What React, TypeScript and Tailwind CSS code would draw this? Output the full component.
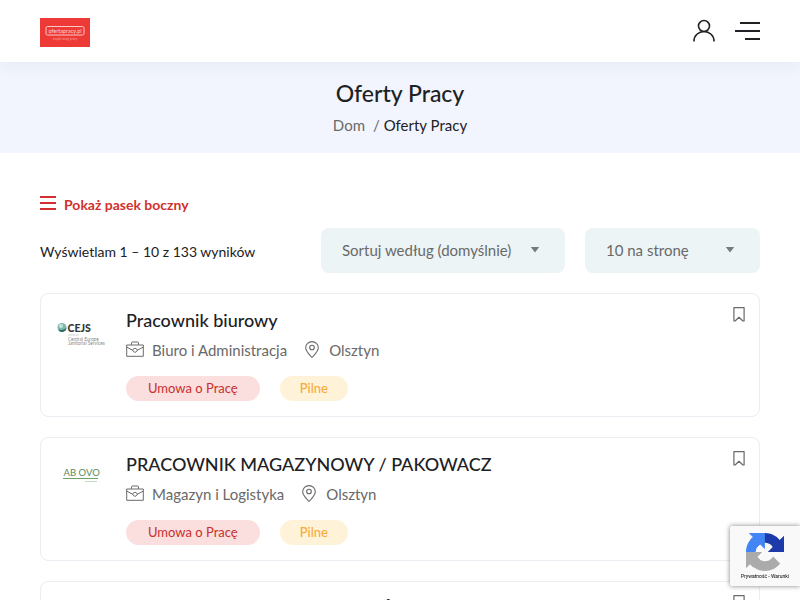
import { useState } from "react";

type Job = {
  id: number;
  title: string;
  category: string;
  city: string;
  logo: "cejs" | "abovo";
};

const jobs: Job[] = [
  { id: 1, title: "Pracownik biurowy", category: "Biuro i Administracja", city: "Olsztyn", logo: "cejs" },
  { id: 2, title: "PRACOWNIK MAGAZYNOWY / PAKOWACZ", category: "Magazyn i Logistyka", city: "Olsztyn", logo: "abovo" },
  { id: 3, title: "PRACOWNIK MAGAZYNU CZĘŚCI", category: "Magazyn i Logistyka", city: "Olsztyn", logo: "abovo" },
];

function SiteLogo() {
  return (
    <svg width="50" height="29" viewBox="0 0 50 29" aria-hidden="true">
      <rect width="50" height="29" fill="#ee3a36" />
      <rect x="6" y="8.5" width="38" height="8.5" rx="1.5" fill="none" stroke="#fbc9c4" />
      <text x="25" y="15" textAnchor="middle" fontSize="5.5" fill="#fbd5d1">
        ofertapracy.pl
      </text>
      <text x="25" y="21.5" textAnchor="middle" fontSize="3" fill="#f8a29d">
        znajdź swoją pracę
      </text>
    </svg>
  );
}

function CejsLogo() {
  return (
    <svg width="50" height="50" viewBox="0 0 50 50" aria-hidden="true">
      <circle cx="6" cy="20.5" r="4.5" fill="#7fb9ad" />
      <path d="M2 22.5a4.5 4.5 0 0 0 8.5-2c-1.5 2-4 3-8.5 2Z" fill="#2b6a66" />
      <circle cx="5" cy="19" r="2" fill="#c5e3dc" />
      <text x="11.500" y="25" fontSize="10.5" fontWeight="900" fill="#33383b">
        CEJS
      </text>
      <path d="M12 28h11" stroke="#b9bcbd" strokeWidth="0.7" />
      <text x="12" y="34" fontSize="4.7" fill="#85898b">
        Central Europe
      </text>
      <text x="12" y="38" fontSize="4.7" fill="#85898b">
        Janitorial Services
      </text>
    </svg>
  );
}

function AbovoLogo() {
  return (
    <svg width="50" height="50" viewBox="0 0 50 50" aria-hidden="true">
      <text x="7.5" y="25" fontSize="9.5" fill="#5c8a5c">
        AB OVO
      </text>
      <path d="M7 27.5h35" stroke="#6fa06e" />
      <path d="M29 30.5h12" stroke="#c3dcc2" />
    </svg>
  );
}

function UserIcon() {
  return (
    <svg width="22" height="24" viewBox="0 0 22 24" fill="none" stroke="#202124" strokeWidth="1.6" aria-hidden="true">
      <circle cx="11" cy="7" r="5.5" />
      <path d="M1 22.5V22a10 9.5 0 0 1 20 0v.5" />
    </svg>
  );
}

function BriefcaseIcon() {
  return (
    <svg width="18" height="18" viewBox="0 0 18 18" fill="none" stroke="#696969" strokeLinejoin="round" aria-hidden="true">
      <path d="M.7 4h16.6v11.300H.7Z" />
      <path d="M5.500 3.800V2a1 1 0 0 1 1-1h5a1 1 0 0 1 1 1v1.800" />
      <path d="M.7 6l6 3.300M17.300 6l-6 3.300" />
      <path d="M6.700 8.700 9 7.100l2.300 1.600v1L9 11.500l-2.300-1.800Z" />
    </svg>
  );
}

function PinIcon() {
  return (
    <svg width="14" height="18" viewBox="0 0 14 18" fill="none" stroke="#696969" strokeWidth="1.1" aria-hidden="true">
      <path d="M7 16.500C4.500 13.500.7 10.300.7 6.700a6.300 6.100 0 0 1 12.600 0c0 3.600-3.800 6.800-6.300 9.800Z" />
      <circle cx="7" cy="6.500" r="2.300" />
    </svg>
  );
}

function BookmarkIcon() {
  return (
    <svg width="12" height="15" viewBox="0 0 12 15" fill="none" stroke="#696969" strokeWidth="1.2" strokeLinejoin="round" aria-hidden="true">
      <path d="M.9.7h10.2V14H9.900L6 10.300 2.100 14H.9Z" />
    </svg>
  );
}

type FilterSelectProps = {
  label: string;
  options: string[];
  className: string;
};

function FilterSelect({ label, options, className }: FilterSelectProps) {
  return (
    <div className={`relative ${className}`}>
      <select
        aria-label={label}
        className="h-[45px] w-full appearance-none rounded-lg bg-[#ecf4f6] pl-[21px] pr-10 text-[15px] text-[#696969] outline-none"
      >
        {options.map((option) => (
          <option key={option}>{option}</option>
        ))}
      </select>
      <svg
        className="pointer-events-none absolute right-[25px] top-[19px]"
        width="10"
        height="6"
        viewBox="0 0 10 6"
        fill="#77797b"
        aria-hidden="true"
      >
        <path d="M.8 0h8.400L5 5.500Z" />
      </svg>
    </div>
  );
}

function JobCard({ job }: { job: Job }) {
  return (
    <li className="flex rounded-lg border border-[#ecedf2] pb-[15px] pl-[15px] pr-[14px] pt-[13px]">
      <div className="mr-5 w-[50px] shrink-0">{job.logo === "cejs" ? <CejsLogo /> : <AbovoLogo />}</div>
      <div className="min-w-0 flex-1">
        <h2 className="text-[18px] font-medium leading-[26px] text-[#202124]">
          <a href="#">{job.title}</a>
        </h2>
        <ul className="mt-[7px] flex gap-[18px] text-[15px] leading-5 text-[#696969]">
          <li className="flex items-center gap-2">
            <BriefcaseIcon />
            {job.category}
          </li>
          <li className="flex items-center gap-[10px]">
            <PinIcon />
            {job.city}
          </li>
        </ul>
        <ul className="mt-4 flex gap-5 text-[13px] leading-[25px]">
          <li className="rounded-full bg-[#fadfde] px-[22px] text-[#c9302c]">Umowa o Pracę</li>
          <li className="rounded-full bg-[#fef2d9] px-5 font-medium text-[#f9ab3a]">Pilne</li>
        </ul>
      </div>
      <button type="button" aria-label="Zapisz ofertę" className="flex h-[15px] w-3 shrink-0">
        <BookmarkIcon />
      </button>
    </li>
  );
}

function RecaptchaBadge() {
  return (
    <div className="fixed bottom-[14px] right-0 flex h-[60px] w-[70px] flex-col items-center rounded-l-xs bg-[#f9f9f9] pt-[7px] shadow-[0_0_5px_gray]">
      <svg width="38" height="38" viewBox="0 0 64 64" aria-hidden="true">
        <path
          d="M64 31.955l-.033-1.37V4.687l-7.16 7.16C50.948 4.674 42.033.093 32.05.093c-10.4 0-19.622 4.96-25.458 12.64l11.736 11.86a15.55 15.55 0 0 1 4.754-5.334c2.05-1.6 4.952-2.906 8.968-2.906.485 0 .86.057 1.135.163 4.976.393 9.288 3.14 11.828 7.124l-8.307 8.307L64 31.953"
          fill="#1c3aa9"
        />
        <path
          d="M31.862.094l-1.37.033H4.594l7.16 7.16C4.58 13.147 0 22.06 0 32.046c0 10.4 4.96 19.622 12.64 25.458L24.5 45.768a15.55 15.55 0 0 1-5.334-4.754c-1.6-2.05-2.906-4.952-2.906-8.968 0-.485.057-.86.163-1.135.393-4.976 3.14-9.288 7.124-11.828l8.307 8.307L31.86.095"
          fill="#4285f4"
        />
        <path
          d="M.001 32.045l.033 1.37v25.898l7.16-7.16c5.86 7.173 14.774 11.754 24.76 11.754 10.4 0 19.622-4.96 25.458-12.64l-11.736-11.86a15.55 15.55 0 0 1-4.754 5.334c-2.05 1.6-4.952 2.906-8.968 2.906-.485 0-.86-.057-1.135-.163-4.976-.393-9.288-3.14-11.828-7.124l8.307-8.307c-10.522.04-22.4.066-27.295-.005"
          fill="#ababab"
        />
      </svg>
      <p className="whitespace-nowrap font-[Roboto,sans-serif] text-[5px] leading-[10px] text-black">
        <a href="#">Prywatność</a> - <a href="#">Warunki</a>
      </p>
    </div>
  );
}

function App() {
  const [sidebarOpen, setSidebarOpen] = useState(false);

  return (
    <div className="bg-white font-[Lato,sans-serif] text-[15px] text-[#202124]">
      <header className="relative flex h-[62px] items-center justify-between bg-white px-10 shadow-[0_6px_15px_rgba(64,79,104,0.05)]">
        <a href="#" aria-label="Strona główna" className="mt-[3px]">
          <SiteLogo />
        </a>
        <div className="flex items-center gap-5">
          <button type="button" aria-label="Konto">
            <UserIcon />
          </button>
          <button type="button" aria-label="Menu" className="flex flex-col items-end gap-1.5">
            <span className="h-0.5 w-5 bg-[#202124]" />
            <span className="h-0.5 w-[25px] bg-[#202124]" />
            <span className="h-0.5 w-[15px] bg-[#202124]" />
          </button>
        </div>
      </header>

      <section className="bg-[#f2f5fd] pb-[17px] pt-[15px] text-center">
        <h1 className="text-[23px] font-medium leading-8">Oferty Pracy</h1>
        <nav className="mt-1.5 flex justify-center gap-2 leading-[21px]">
          <a href="#" className="text-[#696969]">
            Dom
          </a>
          <span>
            <span className="text-[#696969]">/</span> Oferty Pracy
          </span>
        </nav>
      </section>

      <main className="px-10 pt-10">
        <button
          type="button"
          aria-expanded={sidebarOpen}
          onClick={() => setSidebarOpen(!sidebarOpen)}
          className="flex items-center gap-2 text-[14px] font-bold leading-6 text-[#d0312d]"
        >
          <span className="mb-1 flex w-4 flex-col gap-1">
            <span className="h-0.5 bg-current" />
            <span className="h-0.5 bg-current" />
            <span className="h-0.5 bg-current" />
          </span>
          Pokaż pasek boczny
        </button>

        <div className="mt-[11px] flex items-center justify-between">
          <p className="pt-0.5 text-[14px]">Wyświetlam 1 – 10 z 133 wyników</p>
          <div className="flex gap-5">
            <FilterSelect
              label="Sortowanie"
              options={["Sortuj według (domyślnie)", "Najnowsze", "Najstarsze"]}
              className="w-[244px]"
            />
            <FilterSelect
              label="Liczba ofert"
              options={["10 na stronę", "20 na stronę", "30 na stronę"]}
              className="w-[175px]"
            />
          </div>
        </div>

        <ul className="mt-5 flex flex-col gap-5">
          {jobs.map((job) => (
            <JobCard key={job.id} job={job} />
          ))}
        </ul>
      </main>

      <RecaptchaBadge />
    </div>
  );
}

export default App;
